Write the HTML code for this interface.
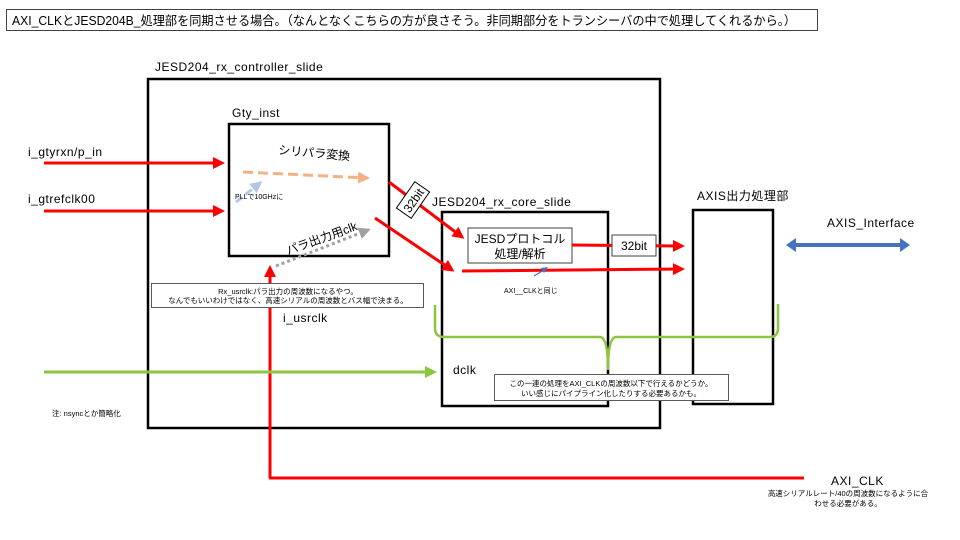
<!DOCTYPE html>
<html><head><meta charset="utf-8"><style>
html,body{margin:0;padding:0;background:#fff;}
svg{display:block;font-family:"Liberation Sans","Noto Sans CJK JP",sans-serif;}
.l{letter-spacing:0.5px;}
</style></head><body>
<svg width="960" height="540" viewBox="0 0 960 540" xmlns="http://www.w3.org/2000/svg">
<defs>
<marker id="ar" markerWidth="4" markerHeight="4" refX="3" refY="2" orient="auto" markerUnits="strokeWidth"><path d="M0,0 L4,2 L0,4 z" fill="#ff0000"/></marker>
<marker id="ag" markerWidth="4" markerHeight="4" refX="3" refY="2" orient="auto" markerUnits="strokeWidth"><path d="M0,0 L4,2 L0,4 z" fill="#8cc63f"/></marker>
<marker id="ao" markerWidth="4" markerHeight="4" refX="3" refY="2" orient="auto" markerUnits="strokeWidth"><path d="M0,0 L4,2 L0,4 z" fill="#f4b183"/></marker>
<marker id="ab" markerWidth="4" markerHeight="4" refX="3" refY="2" orient="auto" markerUnits="strokeWidth"><path d="M0,0 L4,2 L0,4 z" fill="#b4c7e7"/></marker>
<marker id="ay" markerWidth="4" markerHeight="4" refX="3" refY="2" orient="auto" markerUnits="strokeWidth"><path d="M0,0 L4,2 L0,4 z" fill="#a0a0a0"/></marker>
</defs>
<rect x="6.5" y="9.5" width="811" height="21" fill="#fff" stroke="#404040" stroke-width="1"/>
<text x="12" y="25" font-size="12.5" textLength="784" lengthAdjust="spacingAndGlyphs">AXI_CLKとJESD204B_処理部を同期させる場合。（なんとなくこちらの方が良さそう。非同期部分をトランシーバの中で処理してくれるから。）</text>

<text x="155" y="71" font-size="12" class="l">JESD204_rx_controller_slide</text>
<rect x="148" y="79" width="512" height="349" fill="none" stroke="#000" stroke-width="2.5"/>

<text x="232" y="117" font-size="12" class="l">Gty_inst</text>
<rect x="229" y="124" width="160" height="132" fill="#fff" stroke="#000" stroke-width="2.5"/>

<text x="432" y="206" font-size="12" class="l">JESD204_rx_core_slide</text>
<rect x="442" y="212" width="166" height="194" fill="none" stroke="#000" stroke-width="2.5"/>
<rect x="468" y="228" width="104" height="35" fill="#fff" stroke="#404040" stroke-width="1"/>
<text x="520" y="243" font-size="12" text-anchor="middle">JESDプロトコル</text>
<text x="520" y="258" font-size="12" text-anchor="middle">処理/解析</text>

<text x="697" y="200" font-size="12" class="l">AXIS出力処理部</text>
<rect x="693" y="210" width="80" height="194" fill="none" stroke="#000" stroke-width="2.5"/>
<text x="827" y="227" font-size="12" class="l">AXIS_Interface</text>
<line x1="794" y1="245" x2="902" y2="245" stroke="#4472c4" stroke-width="4"/>
<path d="M786,245 L796,238 L796,252 z" fill="#4472c4"/><path d="M910,245 L900,238 L900,252 z" fill="#4472c4"/>

<text x="28" y="156" font-size="12" class="l">i_gtyrxn/p_in</text>
<line x1="44" y1="163" x2="222" y2="163" stroke="#ff0000" stroke-width="3" marker-end="url(#ar)"/>
<text x="28" y="203" font-size="12" class="l">i_gtrefclk00</text>
<line x1="44" y1="211" x2="222" y2="211" stroke="#ff0000" stroke-width="3" marker-end="url(#ar)"/>

<text x="278" y="154" font-size="12" transform="rotate(5 278 154)">シリパラ変換</text>
<line x1="243" y1="172" x2="367" y2="178" stroke="#f4b183" stroke-width="3" stroke-dasharray="10,5" marker-end="url(#ao)"/>
<line x1="236" y1="202" x2="260" y2="183" stroke="#b4c7e7" stroke-width="3" stroke-dasharray="8,4" marker-end="url(#ab)"/>
<text x="235" y="199" font-size="7">PLLで10GHzに</text>
<text x="288" y="255" font-size="12" transform="rotate(-20 288 255)">パラ出力用clk</text>
<line x1="276" y1="266" x2="368" y2="230" stroke="#a0a0a0" stroke-width="3" stroke-dasharray="3,3" marker-end="url(#ay)"/>

<line x1="389" y1="182" x2="462" y2="237" stroke="#ff0000" stroke-width="3" marker-end="url(#ar)"/>
<line x1="375" y1="218" x2="452" y2="270" stroke="#ff0000" stroke-width="3" marker-end="url(#ar)"/>
<g transform="rotate(-55 413 200)"><rect x="397" y="191" width="32" height="18" fill="#fff" stroke="#000" stroke-width="1"/><text x="413" y="205" font-size="12" text-anchor="middle">32bit</text></g>
<line x1="462" y1="271" x2="682" y2="269" stroke="#ff0000" stroke-width="3" marker-end="url(#ar)"/>
<line x1="572" y1="245" x2="682" y2="246" stroke="#ff0000" stroke-width="3" marker-end="url(#ar)"/>
<rect x="612" y="235" width="44" height="21" fill="#fff" stroke="#404040" stroke-width="1"/>
<text x="634" y="250" font-size="12" text-anchor="middle">32bit</text>
<line x1="534" y1="276" x2="544" y2="270" stroke="#4472c4" stroke-width="1.2"/>
<path d="M548,267 L541,268 L544,273 z" fill="#4472c4"/>
<text x="504" y="293" font-size="7">AXI__CLKと同じ</text>

<line x1="270" y1="478" x2="270" y2="268" stroke="#ff0000" stroke-width="3" marker-end="url(#ar)"/>
<line x1="269" y1="478" x2="804" y2="478" stroke="#ff0000" stroke-width="3"/>
<rect x="151.5" y="283.5" width="272" height="24" fill="#fff" stroke="#595959" stroke-width="1"/>
<text x="288" y="294" font-size="7.5" text-anchor="middle">Rx_usrclk:パラ出力の周波数になるやつ。</text>
<text x="288" y="303" font-size="7.5" text-anchor="middle">なんでもいいわけではなく、高速シリアルの周波数とバス幅で決まる。</text>
<text x="283" y="322" font-size="12" class="l">i_usrclk</text>

<line x1="44" y1="372" x2="434" y2="372" stroke="#8cc63f" stroke-width="3" marker-end="url(#ag)"/>
<path d="M435,305 L435,328 Q435,337 444,337 L600,337 Q608,337 608,370 Q608,337 616,337 L770,337 Q778,337 778,328 L778,304" fill="none" stroke="#8cc63f" stroke-width="2.5"/>
<text x="453" y="374" font-size="12" class="l">dclk</text>
<rect x="494.5" y="374.5" width="234" height="26" fill="#fff" stroke="#595959" stroke-width="1"/>
<text x="611" y="386" font-size="7.5" text-anchor="middle">この一連の処理をAXI_CLKの周波数以下で行えるかどうか。</text>
<text x="611" y="396" font-size="7.5" text-anchor="middle">いい感じにパイプライン化したりする必要あるかも。</text>
<text x="52" y="416" font-size="7.5">注: nsyncとか簡略化</text>

<text x="831" y="485" font-size="12" class="l">AXI_CLK</text>
<text x="848" y="496" font-size="7.5" text-anchor="middle">高速シリアルレート/40の周波数になるように合</text>
<text x="848" y="506" font-size="7.5" text-anchor="middle">わせる必要がある。</text>
</svg>
</body></html>
